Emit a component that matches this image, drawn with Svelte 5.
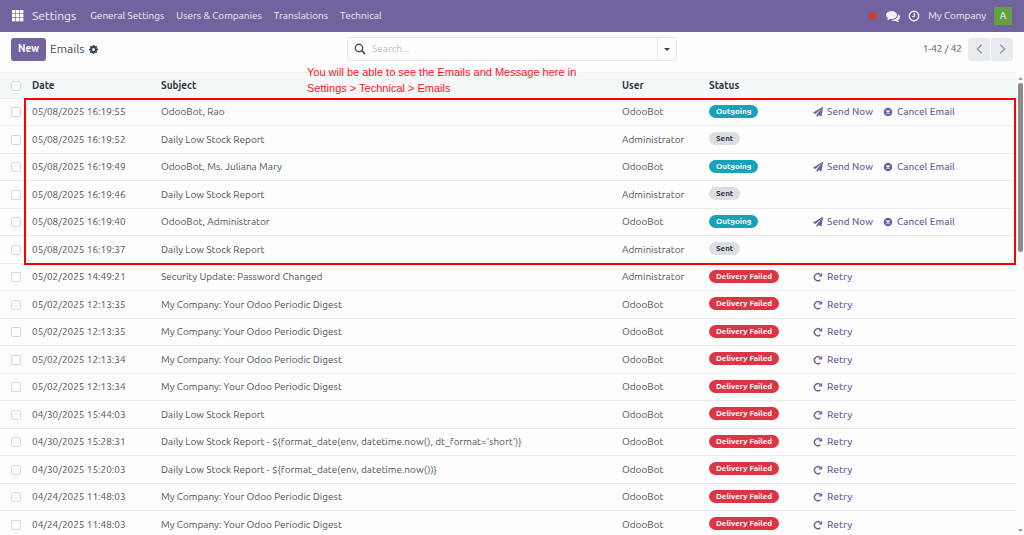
<script lang="ts">
	type Email = { date: string; subject: string; user: string; status: 'Outgoing' | 'Sent' | 'Delivery Failed' };

	const menus = ['General Settings', 'Users & Companies', 'Translations', 'Technical'];
	const digest = 'My Company: Your Odoo Periodic Digest';
	const stock = 'Daily Low Stock Report';
	const total = 42;

	const emails: Email[] = [
		{ date: '05/08/2025 16:19:55', subject: 'OdooBot, Rao', user: 'OdooBot', status: 'Outgoing' },
		{ date: '05/08/2025 16:19:52', subject: stock, user: 'Administrator', status: 'Sent' },
		{ date: '05/08/2025 16:19:49', subject: 'OdooBot, Ms. Juliana Mary', user: 'OdooBot', status: 'Outgoing' },
		{ date: '05/08/2025 16:19:46', subject: stock, user: 'Administrator', status: 'Sent' },
		{ date: '05/08/2025 16:19:40', subject: 'OdooBot, Administrator', user: 'OdooBot', status: 'Outgoing' },
		{ date: '05/08/2025 16:19:37', subject: stock, user: 'Administrator', status: 'Sent' },
		{ date: '05/02/2025 14:49:21', subject: 'Security Update: Password Changed', user: 'Administrator', status: 'Delivery Failed' },
		{ date: '05/02/2025 12:13:35', subject: digest, user: 'OdooBot', status: 'Delivery Failed' },
		{ date: '05/02/2025 12:13:35', subject: digest, user: 'OdooBot', status: 'Delivery Failed' },
		{ date: '05/02/2025 12:13:34', subject: digest, user: 'OdooBot', status: 'Delivery Failed' },
		{ date: '05/02/2025 12:13:34', subject: digest, user: 'OdooBot', status: 'Delivery Failed' },
		{ date: '04/30/2025 15:44:03', subject: stock, user: 'OdooBot', status: 'Delivery Failed' },
		{ date: '04/30/2025 15:28:31', subject: stock + " - ${format_date(env, datetime.now(), dt_format='short')}", user: 'OdooBot', status: 'Delivery Failed' },
		{ date: '04/30/2025 15:20:03', subject: stock + ' - ${format_date(env, datetime.now())}', user: 'OdooBot', status: 'Delivery Failed' },
		{ date: '04/24/2025 11:48:03', subject: digest, user: 'OdooBot', status: 'Delivery Failed' },
		{ date: '04/24/2025 11:48:03', subject: digest, user: 'OdooBot', status: 'Delivery Failed' }
	];

	const badgeClass = { Outgoing: 'info', Sent: 'muted', 'Delivery Failed': 'danger' };

	let selected = $state(emails.map(() => false));
	let allSelected = $derived(selected.every(Boolean));

	function toggleAll() {
		const next = !allSelected;
		selected = selected.map(() => next);
	}
</script>

<div class="page">
	<header class="navbar">
		<button class="apps" aria-label="Home menu">
			<svg viewBox="0 0 12 12" width="12" height="12">
				{#each [0, 4, 8] as y}
					{#each [0, 4, 8] as x}
						<rect {x} {y} width="3.4" height="3.4" fill="#fff" />
					{/each}
				{/each}
			</svg>
		</button>
		<a class="brand" href="#settings">Settings</a>
		<nav>
			{#each menus as menu}
				<a href="#menu">{menu}</a>
			{/each}
		</nav>
		<div class="systray">
			<span class="dot"></span>
			<button aria-label="Messages">
				<svg viewBox="0 0 1792 1792" width="14" height="14">
					<path fill="#f3f1f8" d="M1408 768q0 139-94 257t-256.500 186.500-353.500 68.500q-86 0-176-16-124 88-278 128-36 9-86 16h-3q-11 0-20.500-8t-11.500-21q-1-3-1-6.500t.5-6.500 2-6l2.500-5 3.500-5.500 4-5 4.500-5 4-4.500q5-6 23-25t26-29.500 22.500-29 25-38.500 20.500-44q-124-72-195-177t-71-224q0-139 94-257t256.500-186.500 353.500-68.500 353.500 68.500 256.500 186.500 94 257zm384 256q0 120-71 224.500t-195 176.500q10 24 20.500 44t25 38.500 22.500 29 26 29.500 23 25q1 1 4 4.500t4.500 5 4 5 3.500 5.500l2.500 5 2 6 .5 6.500-1 6.500q-3 14-13 22t-22 7q-50-7-86-16-154-40-278-128-90 16-176 16-271 0-472-132 58 4 88 4 161 0 309-45t264-129q125-92 192-212t67-254q0-77-23-152 129 71 204 178t75 230z" />
				</svg>
			</button>
			<button aria-label="Activities">
				<svg viewBox="0 0 12 12" width="12" height="12" fill="none" stroke="#f3f1f8">
					<circle cx="6" cy="6" r="4.700" stroke-width="1.500" />
					<path d="M6.300 3v3.500H4" stroke-width="1.200" />
				</svg>
			</button>
			<span>My Company</span>
			<button class="avatar">A</button>
		</div>
	</header>

	<div class="control">
		<div class="crumbs">
			<button class="new">New</button>
			<h1>Emails</h1>
			<button aria-label="Actions">
				<svg viewBox="0 0 1536 1536" width="9" height="9">
					<path fill="#374151" fill-rule="evenodd" d="M1024 768q0-106-75-181t-181-75-181 75-75 181 75 181 181 75 181-75 75-181zm512-109v222q0 12-8 23t-20 13l-185 28q-19 54-39 91 35 50 107 138 10 12 10 25t-9 23q-27 37-99 108t-94 71q-12 0-26-9l-138-108q-44 23-91 38-16 136-29 186-7 28-36 28H657q-14 0-24.500-8.500T621 1506l-28-184q-49-16-90-37l-141 107q-10 9-25 9-14 0-25-11-126-114-165-168-7-10-7-23 0-12 8-23 15-21 51-66.500t54-70.500q-27-50-41-99L29 913q-13-2-21-12.500T0 877V655q0-12 8-23t19-13l186-28q14-46 39-92-40-57-107-138-10-12-10-24 0-10 9-23 26-36 98.500-107.500T337 135q13 0 26 10l138 107q44-23 91-38 16-136 29-186 7-28 36-28h222q14 0 24.500 8.500T915 30l28 184q49 16 90 37l142-107q9-9 24-9 13 0 25 10 129 119 165 170 7 8 7 22 0 12-8 23-15 21-51 66.500t-54 70.500q26 50 41 98l183 28q13 2 21 12.500t8 23.500z" />
				</svg>
			</button>
		</div>
		<div class="search" role="search">
			<label for="query" aria-label="Search">
				<svg viewBox="0 0 12 12" width="12" height="12" fill="none" stroke="#4b525b">
					<circle cx="5" cy="5" r="3.700" stroke-width="1.400" />
					<path d="M7.700 7.700l3 3" stroke-width="1.700" stroke-linecap="round" />
				</svg>
			</label>
			<input id="query" type="text" placeholder="Search..." />
			<button aria-label="Toggle search panel">
				<svg viewBox="0 0 6 3" width="6" height="3"><path d="M0 0h6L3 3z" fill="#374151" /></svg>
			</button>
		</div>
		<div class="pager">
			<span>1-{total} / {total}</span>
			<div class="steps">
				<button aria-label="Previous">
					<svg viewBox="0 0 7 10" width="7" height="10"><path d="M5.800.8L1.300 5l4.500 4.200" /></svg>
				</button>
				<button aria-label="Next">
					<svg viewBox="0 0 7 10" width="7" height="10"><path d="M1.200.8L5.700 5 1.200 9.200" /></svg>
				</button>
			</div>
		</div>
	</div>

	<main>
		<div class="list">
			<table>
				<colgroup>
					<col class="c-select" />
					<col class="c-date" />
					<col />
					<col class="c-user" />
					<col class="c-status" />
					<col class="c-actions" />
				</colgroup>
				<thead>
					<tr>
						<th class="select"><input type="checkbox" aria-label="Select all" checked={allSelected} onchange={toggleAll} /></th>
						<th>Date</th>
						<th>Subject</th>
						<th>User</th>
						<th>Status</th>
						<th></th>
					</tr>
				</thead>
				<tbody>
					{#each emails as email, i}
						<tr>
							<td class="select"><input type="checkbox" aria-label="Select email" bind:checked={selected[i]} /></td>
							<td>{email.date}</td>
							<td>{email.subject}</td>
							<td>{email.user}</td>
							<td><span class="badge {badgeClass[email.status]}">{email.status}</span></td>
							<td>
								<div class="actions">
									{#if email.status === 'Outgoing'}
										<button>
											<svg viewBox="0 0 1792 1792" width="10" height="10">
												<path fill="currentColor" d="M1764 11q33 24 27 64l-256 1536q-5 29-32 45-14 8-31 8-11 0-24-5l-453-185-242 295q-18 23-49 23-13 0-22-4-19-7-30.500-23.500T640 1728v-349l864-1059-1069 925-395-162q-37-14-40-55-2-40 32-59L1696 9q15-9 32-9 20 0 36 11z" />
											</svg>
											Send Now
										</button>
										<button>
											<svg viewBox="0 0 10 10" width="10" height="10">
												<circle cx="5" cy="5" r="4.300" fill="currentColor" />
												<path d="M3.500 3.500l3 3M6.500 3.500l-3 3" stroke="#fff" stroke-width="1.400" />
											</svg>
											Cancel Email
										</button>
									{:else if email.status === 'Delivery Failed'}
										<button>
											<svg viewBox="0 0 10 10" width="10" height="10">
												<path d="M7.400 7.700A3.500 3.500 0 1 1 7.300 2.600" fill="none" stroke="currentColor" stroke-width="1.500" />
												<path d="M9.200.8v3.800H5.400z" fill="currentColor" />
											</svg>
											Retry
										</button>
									{/if}
								</div>
							</td>
						</tr>
					{/each}
				</tbody>
			</table>
			<p class="note">You will be able to see the Emails and Message here in<br />Settings &gt; Technical &gt; Emails</p>
			<div class="highlight"></div>
		</div>
		<div class="scrollbar">
			<svg viewBox="0 0 6 3" width="5" height="3"><path d="M0 3h6L3 0z" fill="#8a8a8a" /></svg>
			<div class="track"><div class="thumb" style="height: {(emails.length / total) * 100}%"></div></div>
			<svg viewBox="0 0 6 3" width="5" height="3"><path d="M0 0h6L3 3z" fill="#8a8a8a" /></svg>
		</div>
	</main>
</div>

<style>
	:global(body) {
		background: #fdfdfd;
	}

	.page {
		display: flex;
		flex-direction: column;
		height: 100vh;
		overflow: hidden;
		font: 10px/16px Ubuntu, 'Noto Sans', sans-serif;
		color: #4c535c;
	}

	button {
		display: flex;
		align-items: center;
		justify-content: center;
		padding: 0;
		border: 0;
		background: none;
		color: inherit;
		font: inherit;
	}

	a {
		color: inherit;
		text-decoration: none;
	}

	svg {
		display: block;
		flex: none;
	}

	.navbar {
		display: flex;
		align-items: center;
		flex: none;
		height: 32px;
		padding: 0 12px;
		background: #71639e;
		color: #f0eef6;
	}

	.brand {
		margin: 0 14px 0 8px;
		font-size: 12px;
	}

	nav {
		display: flex;
		gap: 12px;
	}

	.systray {
		display: flex;
		align-items: center;
		gap: 8px;
		margin-left: auto;
	}

	.dot {
		width: 8px;
		height: 8px;
		margin-right: 1px;
		border-radius: 50%;
		background: #d23f3a;
	}

	.avatar {
		width: 18px;
		height: 18px;
		border-radius: 2px;
		background: #65a043;
		color: #fff;
	}

	.control {
		display: grid;
		grid-template-columns: 1fr 330px 1fr;
		align-items: center;
		flex: none;
		height: 40px;
		padding: 0 11px;
	}

	.crumbs {
		display: flex;
		align-items: center;
		gap: 4px;
		padding-bottom: 6px;
	}

	.new {
		width: 35px;
		height: 23px;
		border-radius: 3px;
		background: #71639e;
		color: #fff;
		font-weight: 600;
	}

	h1 {
		margin: 0;
		font-size: 12px;
		font-weight: 400;
		color: #454b54;
	}

	.search {
		display: flex;
		align-items: center;
		box-sizing: border-box;
		height: 24px;
		margin-bottom: 6px;
		border: 1px solid #e4eaec;
		border-radius: 3px;
	}

	.search label {
		padding: 0 6px;
	}

	.search input {
		flex: 1;
		min-width: 0;
		padding: 0;
		border: 0;
		outline: 0;
		background: none;
		color: inherit;
		font: inherit;
	}

	.search input::placeholder {
		color: #bcc1c7;
	}

	.search button {
		align-self: stretch;
		width: 19px;
		border-left: 1px solid #e4eaec;
	}

	.pager {
		display: flex;
		align-items: center;
		justify-content: flex-end;
		gap: 6px;
		padding-bottom: 6px;
	}

	.steps {
		display: flex;
		gap: 1px;
	}

	.steps button {
		width: 22px;
		height: 23px;
		border-radius: 3px 0 0 3px;
		background: #e9ecef;
	}

	.steps button:last-child {
		border-radius: 0 3px 3px 0;
	}

	.steps path {
		fill: none;
		stroke: #8e9499;
		stroke-width: 1.3;
	}

	main {
		display: flex;
		flex: 1;
		min-height: 0;
	}

	.list {
		position: relative;
		flex: 1;
		min-width: 0;
	}

	table {
		width: 100%;
		border-collapse: separate;
		border-spacing: 0;
		table-layout: fixed;
	}

	.c-select {
		width: 27px;
	}

	.c-date {
		width: 129px;
	}

	.c-user {
		width: 87px;
	}

	.c-status {
		width: 104px;
	}

	.c-actions {
		width: 208px;
	}

	th,
	td {
		box-sizing: border-box;
		height: 27px;
		padding: 0 0 0 5px;
		border-bottom: 1px solid #e8ecef;
		text-align: left;
		white-space: nowrap;
	}

	tbody tr:nth-child(even) td {
		height: 28px;
	}

	th {
		border-top: 1px solid #edf1f2;
		background: #f4f8f8;
		color: #30363e;
		font-weight: 600;
	}

	.select {
		padding-left: 11px;
	}

	input[type='checkbox'] {
		display: block;
		appearance: none;
		box-sizing: border-box;
		width: 10px;
		height: 10px;
		margin: 0;
		border: 1px solid #d5d8dc;
		border-radius: 2px;
		background: #fff;
	}

	input[type='checkbox']:checked {
		background: #71639e;
	}

	.badge {
		display: block;
		width: fit-content;
		margin-bottom: 2px;
		padding: 0 7px;
		border-radius: 7px;
		font-size: 8px;
		font-weight: 700;
		line-height: 13px;
		color: #fff;
	}

	.info {
		background: #17a2b8;
	}

	.muted {
		background: #dbdfe4;
		color: #2b3036;
	}

	.danger {
		background: #dc3545;
	}

	.actions {
		display: flex;
		gap: 10px;
		color: #71639e;
		font-weight: 500;
	}

	.actions button {
		gap: 4px;
	}

	.note {
		position: absolute;
		top: -8px;
		left: 307px;
		margin: 0;
		color: #fb1414;
		font: 11px/16px 'Liberation Sans', Arial, sans-serif;
	}

	/* frames the six most recent emails */
	.highlight {
		position: absolute;
		top: 26px;
		left: 24px;
		right: 0;
		box-sizing: border-box;
		height: 167px;
		border: 2px solid #fe0000;
	}

	.scrollbar {
		display: flex;
		flex-direction: column;
		align-items: center;
		width: 8px;
		padding: 5px 0 3px;
	}

	.track {
		flex: 1;
		margin: 3px 0;
	}

	.thumb {
		width: 5px;
		border-radius: 3px;
		background: #8b8b8b;
	}
</style>
